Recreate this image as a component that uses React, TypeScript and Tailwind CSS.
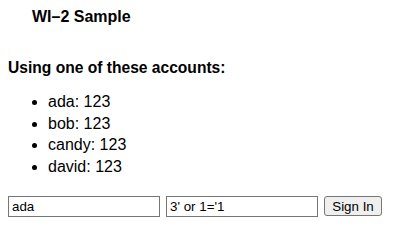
export default function App() {
  return (
    <div className="min-h-[231px] bg-white px-2 text-black [font-family:'Liberation_Sans',Arial,sans-serif]">
      <div className="pl-[24px] pt-[8px] text-[16px] font-bold leading-[18px]">WI–2 Sample</div>
      <div className="mt-[33px] text-[15.6px] font-bold leading-[18px]">Using one of these accounts:</div>
      <ul className="mt-[14px] list-disc pl-[40px] text-[16px] leading-[21.7px]">
        <li>ada: 123</li>
        <li>bob: 123</li>
        <li>candy: 123</li>
        <li>david: 123</li>
      </ul>
      <form className="mt-[18px] flex items-center gap-[6px]" onSubmit={(e) => e.preventDefault()}>
        <input
          defaultValue="ada"
          className="h-[21px] w-[152px] border border-[#767676] px-[3px] text-[13.33px] outline-none"
        />
        <input
          defaultValue="3' or 1='1"
          className="h-[21px] w-[152px] border border-[#767676] px-[3px] text-[13.33px] outline-none"
        />
        <button
          type="submit"
          className="h-[20px] w-[58px] rounded-[3px] border border-[#767676] bg-[#efefef] text-[13.33px]"
        >
          Sign In
        </button>
      </form>
    </div>
  );
}
